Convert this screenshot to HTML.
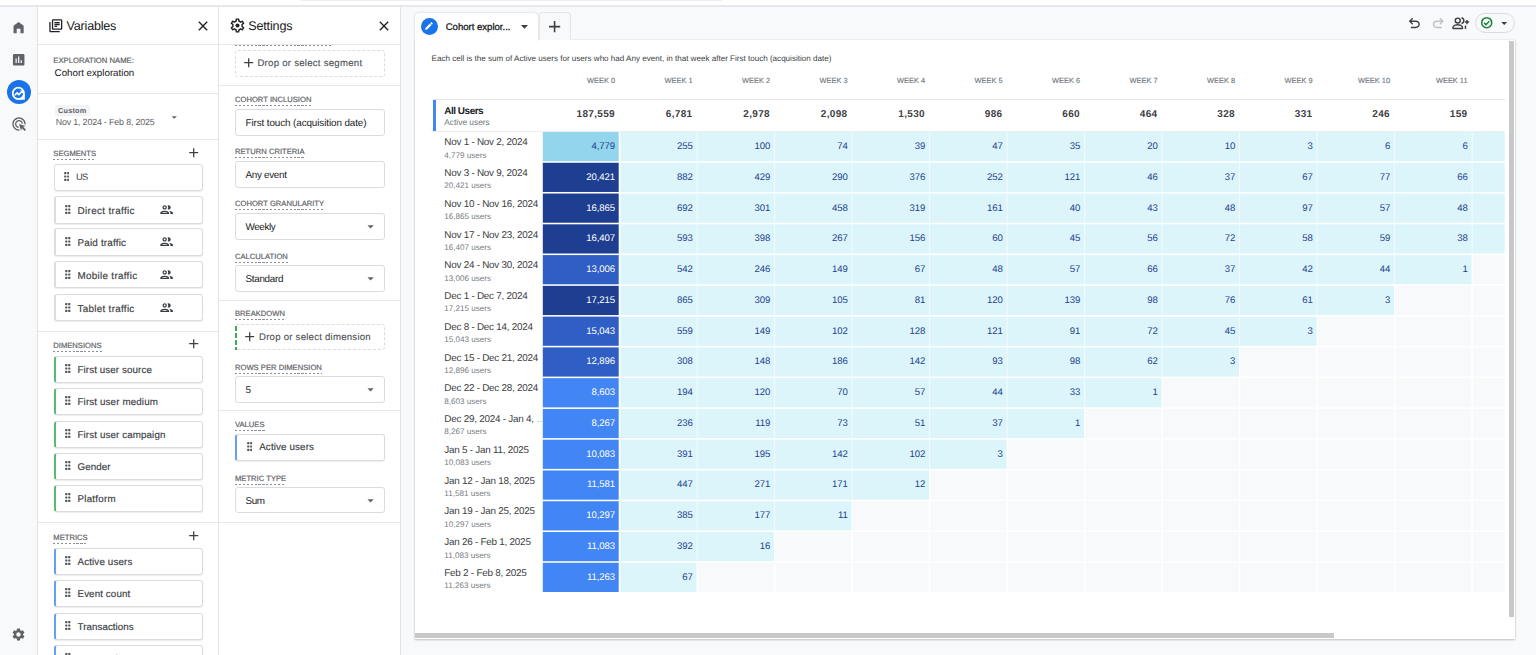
<!DOCTYPE html>
<html lang="en"><head><meta charset="utf-8"><title>Cohort exploration</title>
<style>
html,body{margin:0;padding:0}
body{width:1536px;height:655px;overflow:hidden;background:#fff;position:relative;font-family:"Liberation Sans",Arial,sans-serif;color:#3c4043;-webkit-font-smoothing:antialiased;text-rendering:geometricPrecision}
div,span{box-sizing:border-box}
.abs,.ic,.t,.lbl,.card,.box,.cell,.hd,.tot,.rl,.rs{position:absolute}
.t{white-space:nowrap;line-height:1}
.lbl{white-space:nowrap;line-height:1;font-size:7.6px;letter-spacing:.02px;color:#5f6368;-webkit-text-stroke:.2px #5f6368;padding-bottom:2.6px;background:repeating-linear-gradient(90deg,#8a9096 0,#8a9096 2.2px,transparent 2.2px,transparent 3.9px) left bottom/100% 1px no-repeat}
.card{left:53.5px;width:149.5px;height:27px;background:#fff;border:1px solid #dadce0;border-radius:3px;box-shadow:0 1px 1px rgba(60,64,67,.10)}
.card.seg{border-left:2px solid #dadce0}
.card.dim{border-left:2.6px solid #5bb974}
.card.met{border-left:2.6px solid #669df6}
.card .t{font-size:10.2px;color:#3c4043;-webkit-text-stroke:.16px #3c4043}
.ct{color:#4d5156;-webkit-text-stroke:.12px #4d5156}
.box{left:235px;width:149.5px;height:26.4px;background:#fff;border:1px solid #dadce0;border-radius:3px}
.box .t{left:9.5px;top:9px;color:#202124}
.hline{position:absolute;height:1px;background:#e6e8eb}
.cell{height:29.2px;width:80px;text-align:right;font-size:9.6px;letter-spacing:-.1px;line-height:30.6px;padding-right:3.8px;color:#1f3f8f;white-space:nowrap}
.hd{font-size:7.4px;letter-spacing:0;color:#747a80;-webkit-text-stroke:.15px #747a80;text-align:right;width:76px;line-height:1;white-space:nowrap}
.tot{font-size:10px;font-weight:700;letter-spacing:.33px;color:#3c4043;text-align:right;width:76px;line-height:1;white-space:nowrap}
.rl{left:444.3px;font-size:9.9px;letter-spacing:-.24px;color:#3c4043;line-height:1;white-space:nowrap;width:98.2px;height:12px;overflow:hidden}
.rs{left:444.3px;font-size:8.1px;color:#777c82;line-height:1;white-space:nowrap}
</style></head><body>

<div class="abs" style="left:300px;top:0;width:422px;height:1px;background:#eceef0"></div>
<div class="abs" style="left:0;top:5px;width:1536px;height:1.5px;background:#e6e8eb"></div>
<div class="abs" style="left:0;top:6.5px;width:37px;height:649px;background:#f8f9fa;border-right:1px solid #e0e2e5;width:38px"></div>
<svg class="ic" style="left:11px;top:20.3px;width:15.2px;height:15.2px;" viewBox="0 0 24 24"><path fill="#5f6368" d="M12 3L4 9v12h5v-7h6v7h5V9z"/></svg>
<svg class="ic" style="left:11.4px;top:52.2px;width:15.4px;height:15.4px;" viewBox="0 0 24 24"><path fill="#5f6368" d="M19 3H5c-1.1 0-2 .9-2 2v14c0 1.1.9 2 2 2h14c1.1 0 2-.9 2-2V5c0-1.1-.9-2-2-2zM9 17H7v-7h2v7zm4 0h-2V7h2v10zm4 0h-2v-4h2v4z"/></svg>
<div class="abs" style="left:6.6px;top:80px;width:24px;height:24px;border-radius:50%;background:#1a73e8"></div>
<svg class="ic" style="left:10.05px;top:84.55px;width:16.7px;height:16.7px;overflow:visible" viewBox="0 0 24 24"><path fill="#fff" d="M21.300 12.500v8.800h-8.800z"/><circle cx="12" cy="12" r="8.100" fill="#1a73e8" stroke="#fff" stroke-width="2.600"/><path fill="none" stroke="#fff" stroke-width="2.300" stroke-linejoin="miter" d="M6.900 14.500l3.200-3.200 2.600 2.600 3.900-3.900"/><path fill="#fff" d="M14.200 8h4.500v4.500z"/></svg>
<svg class="ic" style="left:11px;top:116px;width:16px;height:16px;" viewBox="0 0 24 24"><path fill="#5f6368" d="M11.71 17.99C8.53 17.84 6 15.22 6 12c0-3.31 2.69-6 6-6 3.22 0 5.84 2.53 5.99 5.71l-2.1-.63C15.48 9.31 13.89 8 12 8c-2.21 0-4 1.79-4 4 0 1.890 1.310 3.480 3.080 3.890l.63 2.1zM22 12c0 .3-.01.6-.04.9l-1.970-.590c.010-.100.010-.210.010-.310 0-4.420-3.580-8-8-8s-8 3.580-8 8 3.580 8 8 8c.100 0 .210 0 .310-.010l.590 1.970c-.3.03-.6.04-.9.04-5.520 0-10-4.480-10-10S6.480 2 12 2s10 4.480 10 10zm-3.770 4.260L22 15l-10-3 3 10 1.260-3.770 4.270 4.270 1.980-1.980-4.280-4.260z"/></svg>
<svg class="ic" style="left:11.3px;top:627.3px;width:15px;height:15px;" viewBox="0 0 24 24"><path fill="#5f6368" d="M19.14 12.94c.04-.3.06-.61.06-.94 0-.32-.02-.64-.07-.94l2.030-1.580c.18-.14.23-.41.12-.61l-1.920-3.320c-.12-.22-.37-.29-.59-.22l-2.390.96c-.5-.38-1.030-.7-1.620-.94l-.36-2.540c-.04-.24-.24-.41-.48-.41h-3.840c-.24 0-.43.17-.47.41l-.36 2.540c-.59.24-1.130.57-1.620.94l-2.390-.96c-.22-.08-.47 0-.59.22L2.740 8.870c-.12.21-.08.47.12.61l2.030 1.580c-.05.3-.09.63-.09.94s.02.64.07.94l-2.030 1.580c-.18.14-.23.41-.12.61l1.920 3.320c.12.22.37.29.59.22l2.390-.96c.5.38 1.030.7 1.620.94l.36 2.540c.05.24.24.41.48.41h3.840c.24 0 .44-.17.47-.41l.36-2.540c.59-.24 1.130-.56 1.620-.94l2.390.96c.22.08.47 0 .59-.22l1.920-3.320c.12-.22.07-.47-.12-.61l-2.010-1.580zM12 15.600c-1.980 0-3.600-1.620-3.600-3.600s1.620-3.600 3.600-3.600 3.600 1.620 3.600 3.600-1.620 3.600-3.600 3.600z"/></svg>
<div class="abs" style="left:38px;top:6.5px;width:181px;height:649px;background:#fff;border-right:1px solid #e2e4e7"></div>
<svg class="ic" style="left:48px;top:18px;width:15.6px;height:15.6px;" viewBox="0 0 24 24"><path fill="#202124" d="M4 6H2v14c0 1.100.9 2 2 2h14v-2H4V6zm16-4H8c-1.100 0-2 .9-2 2v12c0 1.100.9 2 2 2h12c1.100 0 2-.9 2-2V4c0-1.100-.9-2-2-2zm0 14H8V4h12v12zM10 9h8v2h-8zm0 3h4v2h-4zm0-6h8v2h-8z"/></svg>
<div class="t" style="left:66.6px;top:20.1px;font-size:12.6px;letter-spacing:-.23px;color:#202124">Variables</div>
<svg class="ic" style="left:194.5px;top:17.8px;width:16px;height:16px;" viewBox="0 0 24 24"><path fill="#202124" d="M19 6.41L17.59 5 12 10.59 6.41 5 5 6.41 10.59 12 5 17.59 6.41 19 12 13.41 17.59 19 19 17.59 13.41 12z"/></svg>
<div class="hline" style="left:38px;top:44px;width:180px"></div>
<div class="t" style="left:53.3px;top:57.2px;font-size:7.7px;letter-spacing:0;color:#5f6368;-webkit-text-stroke:.2px #5f6368">EXPLORATION NAME:</div>
<div class="t" style="left:54.6px;top:68.500px;font-size:9.75px;color:#202124">Cohort exploration</div>
<div class="hline" style="left:38px;top:93px;width:180px"></div>
<div class="abs" style="left:55.3px;top:105.3px;width:34.5px;height:10.6px;background:#f1f3f4;border-radius:2px"></div>
<div class="t" style="left:58px;top:107.3px;font-size:7.3px;font-weight:700;letter-spacing:.22px;color:#5f6368">Custom</div>
<div class="t" style="left:55.7px;top:118px;font-size:8.9px;letter-spacing:-.17px;color:#5f6368">Nov 1, 2024 - Feb 8, 2025</div>
<svg class="ic" style="left:167.6px;top:110.5px;width:12.6px;height:12.6px;" viewBox="0 0 24 24"><path fill="#5f6368" d="M7 10l5 5 5-5z"/></svg>
<div class="hline" style="left:38px;top:139px;width:180px"></div>
<div class="lbl" style="left:53.3px;top:150.3px">SEGMENTS</div>
<svg class="ic" style="left:185.6px;top:144.60000000000002px;width:15.4px;height:15.4px;" viewBox="0 0 24 24"><path fill="#3c4043" d="M19 13h-6v6h-2v-6H5v-2h6V5h2v6h6v2z"/></svg>
<div class="card" style="top:164px;height:27px"><svg class="ic" style="left:9.2px;top:7.4px;width:5.6px;height:9px" viewBox="0 0 5.6 9"><rect x="0.20" y="0.10" width="2.2" height="2.2" rx=".5" fill="#54585d"/><rect x="0.20" y="3.40" width="2.2" height="2.2" rx=".5" fill="#54585d"/><rect x="0.20" y="6.70" width="2.2" height="2.2" rx=".5" fill="#54585d"/><rect x="3.20" y="0.10" width="2.2" height="2.2" rx=".5" fill="#54585d"/><rect x="3.20" y="3.40" width="2.2" height="2.2" rx=".5" fill="#54585d"/><rect x="3.20" y="6.70" width="2.2" height="2.2" rx=".5" fill="#54585d"/></svg><div class="t" style="left:21.5px;top:8.4px;font-size:9.3px;letter-spacing:-.7px;-webkit-text-stroke:0">US</div></div>
<div class="card seg" style="top:196px;height:28px"><svg class="ic" style="left:9.6px;top:8.1px;width:5.6px;height:9px" viewBox="0 0 5.6 9"><rect x="0.20" y="0.10" width="2.2" height="2.2" rx=".5" fill="#54585d"/><rect x="0.20" y="3.40" width="2.2" height="2.2" rx=".5" fill="#54585d"/><rect x="0.20" y="6.70" width="2.2" height="2.2" rx=".5" fill="#54585d"/><rect x="3.20" y="0.10" width="2.2" height="2.2" rx=".5" fill="#54585d"/><rect x="3.20" y="3.40" width="2.2" height="2.2" rx=".5" fill="#54585d"/><rect x="3.20" y="6.70" width="2.2" height="2.2" rx=".5" fill="#54585d"/></svg><div class="t" style="left:22px;top:9.700px;font-size:9.9px;letter-spacing:0.345px">Direct traffic</div><svg class="ic" style="left:103px;top:5.3px;width:15.2px;height:15.2px;" viewBox="0 0 24 24"><path fill="#3c4043" d="M9 13.750c-2.340 0-7 1.170-7 3.500V19h14v-1.750c0-2.330-4.660-3.500-7-3.500zM4.340 17c.84-.58 2.870-1.250 4.660-1.250s3.820.67 4.660 1.250H4.340zM9 12c1.930 0 3.500-1.570 3.500-3.500S10.930 5 9 5 5.500 6.570 5.500 8.500 7.070 12 9 12zm0-5c.83 0 1.500.67 1.500 1.500S9.830 10 9 10s-1.500-.67-1.500-1.500S8.170 7 9 7zm7.040 6.810c1.160.84 1.960 1.960 1.960 3.440V19h4v-1.750c0-2.020-3.500-3.170-5.960-3.440zM15 12c1.930 0 3.500-1.570 3.500-3.500S16.930 5 15 5c-.54 0-1.040.13-1.500.35.63.89 1 1.980 1 3.150s-.37 2.260-1 3.150c.46.22.96.35 1.500.35z"/></svg></div>
<div class="card seg" style="top:228px;height:28px"><svg class="ic" style="left:9.6px;top:8.1px;width:5.6px;height:9px" viewBox="0 0 5.6 9"><rect x="0.20" y="0.10" width="2.2" height="2.2" rx=".5" fill="#54585d"/><rect x="0.20" y="3.40" width="2.2" height="2.2" rx=".5" fill="#54585d"/><rect x="0.20" y="6.70" width="2.2" height="2.2" rx=".5" fill="#54585d"/><rect x="3.20" y="0.10" width="2.2" height="2.2" rx=".5" fill="#54585d"/><rect x="3.20" y="3.40" width="2.2" height="2.2" rx=".5" fill="#54585d"/><rect x="3.20" y="6.70" width="2.2" height="2.2" rx=".5" fill="#54585d"/></svg><div class="t" style="left:22px;top:9.700px;font-size:9.9px;letter-spacing:0.181px">Paid traffic</div><svg class="ic" style="left:103px;top:5.3px;width:15.2px;height:15.2px;" viewBox="0 0 24 24"><path fill="#3c4043" d="M9 13.750c-2.340 0-7 1.170-7 3.500V19h14v-1.750c0-2.330-4.660-3.500-7-3.500zM4.340 17c.84-.58 2.870-1.250 4.660-1.250s3.820.67 4.660 1.250H4.340zM9 12c1.930 0 3.500-1.570 3.500-3.500S10.930 5 9 5 5.500 6.570 5.500 8.500 7.070 12 9 12zm0-5c.83 0 1.500.67 1.500 1.500S9.830 10 9 10s-1.500-.67-1.500-1.500S8.170 7 9 7zm7.040 6.810c1.160.84 1.960 1.960 1.960 3.440V19h4v-1.750c0-2.020-3.500-3.170-5.960-3.440zM15 12c1.930 0 3.500-1.570 3.500-3.500S16.930 5 15 5c-.54 0-1.040.13-1.500.35.63.89 1 1.980 1 3.150s-.37 2.260-1 3.150c.46.22.96.35 1.500.35z"/></svg></div>
<div class="card seg" style="top:261px;height:27px"><svg class="ic" style="left:9.6px;top:8.1px;width:5.6px;height:9px" viewBox="0 0 5.6 9"><rect x="0.20" y="0.10" width="2.2" height="2.2" rx=".5" fill="#54585d"/><rect x="0.20" y="3.40" width="2.2" height="2.2" rx=".5" fill="#54585d"/><rect x="0.20" y="6.70" width="2.2" height="2.2" rx=".5" fill="#54585d"/><rect x="3.20" y="0.10" width="2.2" height="2.2" rx=".5" fill="#54585d"/><rect x="3.20" y="3.40" width="2.2" height="2.2" rx=".5" fill="#54585d"/><rect x="3.20" y="6.70" width="2.2" height="2.2" rx=".5" fill="#54585d"/></svg><div class="t" style="left:22px;top:9.700px;font-size:9.9px;letter-spacing:0.290px">Mobile traffic</div><svg class="ic" style="left:103px;top:5.3px;width:15.2px;height:15.2px;" viewBox="0 0 24 24"><path fill="#3c4043" d="M9 13.750c-2.340 0-7 1.170-7 3.500V19h14v-1.750c0-2.330-4.660-3.500-7-3.500zM4.340 17c.84-.58 2.870-1.250 4.660-1.250s3.820.67 4.660 1.250H4.340zM9 12c1.930 0 3.500-1.570 3.500-3.500S10.930 5 9 5 5.500 6.570 5.500 8.500 7.070 12 9 12zm0-5c.83 0 1.500.67 1.500 1.500S9.830 10 9 10s-1.500-.67-1.500-1.500S8.170 7 9 7zm7.040 6.810c1.160.84 1.960 1.960 1.960 3.440V19h4v-1.750c0-2.020-3.500-3.170-5.960-3.440zM15 12c1.930 0 3.500-1.570 3.500-3.500S16.930 5 15 5c-.54 0-1.040.13-1.500.35.63.89 1 1.980 1 3.150s-.37 2.260-1 3.150c.46.22.96.35 1.500.35z"/></svg></div>
<div class="card seg" style="top:294px;height:27px"><svg class="ic" style="left:9.6px;top:8.1px;width:5.6px;height:9px" viewBox="0 0 5.6 9"><rect x="0.20" y="0.10" width="2.2" height="2.2" rx=".5" fill="#54585d"/><rect x="0.20" y="3.40" width="2.2" height="2.2" rx=".5" fill="#54585d"/><rect x="0.20" y="6.70" width="2.2" height="2.2" rx=".5" fill="#54585d"/><rect x="3.20" y="0.10" width="2.2" height="2.2" rx=".5" fill="#54585d"/><rect x="3.20" y="3.40" width="2.2" height="2.2" rx=".5" fill="#54585d"/><rect x="3.20" y="6.70" width="2.2" height="2.2" rx=".5" fill="#54585d"/></svg><div class="t" style="left:22px;top:9.700px;font-size:9.9px;letter-spacing:0.288px">Tablet traffic</div><svg class="ic" style="left:103px;top:5.3px;width:15.2px;height:15.2px;" viewBox="0 0 24 24"><path fill="#3c4043" d="M9 13.750c-2.340 0-7 1.170-7 3.500V19h14v-1.750c0-2.330-4.660-3.500-7-3.500zM4.340 17c.84-.58 2.870-1.250 4.660-1.250s3.820.67 4.660 1.250H4.340zM9 12c1.930 0 3.500-1.570 3.500-3.500S10.930 5 9 5 5.500 6.570 5.500 8.500 7.070 12 9 12zm0-5c.83 0 1.500.67 1.500 1.500S9.830 10 9 10s-1.500-.67-1.500-1.500S8.170 7 9 7zm7.040 6.810c1.160.84 1.960 1.960 1.960 3.440V19h4v-1.750c0-2.020-3.500-3.170-5.960-3.440zM15 12c1.930 0 3.500-1.570 3.500-3.500S16.930 5 15 5c-.54 0-1.040.13-1.500.35.63.89 1 1.980 1 3.150s-.37 2.260-1 3.150c.46.22.96.35 1.500.35z"/></svg></div>
<div class="hline" style="left:38px;top:331px;width:180px"></div>
<div class="lbl" style="left:53.3px;top:341.7px">DIMENSIONS</div>
<svg class="ic" style="left:185.6px;top:336.0px;width:15.4px;height:15.4px;" viewBox="0 0 24 24"><path fill="#3c4043" d="M19 13h-6v6h-2v-6H5v-2h6V5h2v6h6v2z"/></svg>
<div class="card dim" style="top:356px"><svg class="ic" style="left:9.6px;top:7.2px;width:5.6px;height:9px" viewBox="0 0 5.6 9"><rect x="0.20" y="0.10" width="2.2" height="2.2" rx=".5" fill="#54585d"/><rect x="0.20" y="3.40" width="2.2" height="2.2" rx=".5" fill="#54585d"/><rect x="0.20" y="6.70" width="2.2" height="2.2" rx=".5" fill="#54585d"/><rect x="3.20" y="0.10" width="2.2" height="2.2" rx=".5" fill="#54585d"/><rect x="3.20" y="3.40" width="2.2" height="2.2" rx=".5" fill="#54585d"/><rect x="3.20" y="6.70" width="2.2" height="2.2" rx=".5" fill="#54585d"/></svg><div class="t" style="left:22px;top:9px;font-size:9.8px;letter-spacing:0.088px">First user source</div></div>
<div class="card dim" style="top:388px"><svg class="ic" style="left:9.6px;top:7.2px;width:5.6px;height:9px" viewBox="0 0 5.6 9"><rect x="0.20" y="0.10" width="2.2" height="2.2" rx=".5" fill="#54585d"/><rect x="0.20" y="3.40" width="2.2" height="2.2" rx=".5" fill="#54585d"/><rect x="0.20" y="6.70" width="2.2" height="2.2" rx=".5" fill="#54585d"/><rect x="3.20" y="0.10" width="2.2" height="2.2" rx=".5" fill="#54585d"/><rect x="3.20" y="3.40" width="2.2" height="2.2" rx=".5" fill="#54585d"/><rect x="3.20" y="6.70" width="2.2" height="2.2" rx=".5" fill="#54585d"/></svg><div class="t" style="left:22px;top:9px;font-size:9.8px;letter-spacing:0.124px">First user medium</div></div>
<div class="card dim" style="top:421px"><svg class="ic" style="left:9.6px;top:7.2px;width:5.6px;height:9px" viewBox="0 0 5.6 9"><rect x="0.20" y="0.10" width="2.2" height="2.2" rx=".5" fill="#54585d"/><rect x="0.20" y="3.40" width="2.2" height="2.2" rx=".5" fill="#54585d"/><rect x="0.20" y="6.70" width="2.2" height="2.2" rx=".5" fill="#54585d"/><rect x="3.20" y="0.10" width="2.2" height="2.2" rx=".5" fill="#54585d"/><rect x="3.20" y="3.40" width="2.2" height="2.2" rx=".5" fill="#54585d"/><rect x="3.20" y="6.70" width="2.2" height="2.2" rx=".5" fill="#54585d"/></svg><div class="t" style="left:22px;top:9px;font-size:9.8px;letter-spacing:0.103px">First user campaign</div></div>
<div class="card dim" style="top:453px"><svg class="ic" style="left:9.6px;top:7.2px;width:5.6px;height:9px" viewBox="0 0 5.6 9"><rect x="0.20" y="0.10" width="2.2" height="2.2" rx=".5" fill="#54585d"/><rect x="0.20" y="3.40" width="2.2" height="2.2" rx=".5" fill="#54585d"/><rect x="0.20" y="6.70" width="2.2" height="2.2" rx=".5" fill="#54585d"/><rect x="3.20" y="0.10" width="2.2" height="2.2" rx=".5" fill="#54585d"/><rect x="3.20" y="3.40" width="2.2" height="2.2" rx=".5" fill="#54585d"/><rect x="3.20" y="6.70" width="2.2" height="2.2" rx=".5" fill="#54585d"/></svg><div class="t" style="left:22px;top:9px;font-size:9.8px;letter-spacing:0.045px">Gender</div></div>
<div class="card dim" style="top:485px"><svg class="ic" style="left:9.6px;top:7.2px;width:5.6px;height:9px" viewBox="0 0 5.6 9"><rect x="0.20" y="0.10" width="2.2" height="2.2" rx=".5" fill="#54585d"/><rect x="0.20" y="3.40" width="2.2" height="2.2" rx=".5" fill="#54585d"/><rect x="0.20" y="6.70" width="2.2" height="2.2" rx=".5" fill="#54585d"/><rect x="3.20" y="0.10" width="2.2" height="2.2" rx=".5" fill="#54585d"/><rect x="3.20" y="3.40" width="2.2" height="2.2" rx=".5" fill="#54585d"/><rect x="3.20" y="6.70" width="2.2" height="2.2" rx=".5" fill="#54585d"/></svg><div class="t" style="left:22px;top:9px;font-size:9.8px;letter-spacing:0.230px">Platform</div></div>
<div class="hline" style="left:38px;top:522px;width:180px"></div>
<div class="lbl" style="left:53.3px;top:533.7px">METRICS</div>
<svg class="ic" style="left:185.6px;top:528.0px;width:15.4px;height:15.4px;" viewBox="0 0 24 24"><path fill="#3c4043" d="M19 13h-6v6h-2v-6H5v-2h6V5h2v6h6v2z"/></svg>
<div class="card met" style="top:548px"><svg class="ic" style="left:9.6px;top:7.2px;width:5.6px;height:9px" viewBox="0 0 5.6 9"><rect x="0.20" y="0.10" width="2.2" height="2.2" rx=".5" fill="#54585d"/><rect x="0.20" y="3.40" width="2.2" height="2.2" rx=".5" fill="#54585d"/><rect x="0.20" y="6.70" width="2.2" height="2.2" rx=".5" fill="#54585d"/><rect x="3.20" y="0.10" width="2.2" height="2.2" rx=".5" fill="#54585d"/><rect x="3.20" y="3.40" width="2.2" height="2.2" rx=".5" fill="#54585d"/><rect x="3.20" y="6.70" width="2.2" height="2.2" rx=".5" fill="#54585d"/></svg><div class="t" style="left:22px;top:9px;font-size:9.8px;letter-spacing:0.132px">Active users</div></div>
<div class="card met" style="top:580px"><svg class="ic" style="left:9.6px;top:7.2px;width:5.6px;height:9px" viewBox="0 0 5.6 9"><rect x="0.20" y="0.10" width="2.2" height="2.2" rx=".5" fill="#54585d"/><rect x="0.20" y="3.40" width="2.2" height="2.2" rx=".5" fill="#54585d"/><rect x="0.20" y="6.70" width="2.2" height="2.2" rx=".5" fill="#54585d"/><rect x="3.20" y="0.10" width="2.2" height="2.2" rx=".5" fill="#54585d"/><rect x="3.20" y="3.40" width="2.2" height="2.2" rx=".5" fill="#54585d"/><rect x="3.20" y="6.70" width="2.2" height="2.2" rx=".5" fill="#54585d"/></svg><div class="t" style="left:22px;top:9px;font-size:9.8px;letter-spacing:0.096px">Event count</div></div>
<div class="card met" style="top:613px"><svg class="ic" style="left:9.6px;top:7.2px;width:5.6px;height:9px" viewBox="0 0 5.6 9"><rect x="0.20" y="0.10" width="2.2" height="2.2" rx=".5" fill="#54585d"/><rect x="0.20" y="3.40" width="2.2" height="2.2" rx=".5" fill="#54585d"/><rect x="0.20" y="6.70" width="2.2" height="2.2" rx=".5" fill="#54585d"/><rect x="3.20" y="0.10" width="2.2" height="2.2" rx=".5" fill="#54585d"/><rect x="3.20" y="3.40" width="2.2" height="2.2" rx=".5" fill="#54585d"/><rect x="3.20" y="6.70" width="2.2" height="2.2" rx=".5" fill="#54585d"/></svg><div class="t" style="left:22px;top:9px;font-size:9.8px;letter-spacing:0.045px">Transactions</div></div>
<div class="card met" style="top:645px"><svg class="ic" style="left:9.6px;top:7.2px;width:5.6px;height:9px" viewBox="0 0 5.6 9"><rect x="0.20" y="0.10" width="2.2" height="2.2" rx=".5" fill="#54585d"/><rect x="0.20" y="3.40" width="2.2" height="2.2" rx=".5" fill="#54585d"/><rect x="0.20" y="6.70" width="2.2" height="2.2" rx=".5" fill="#54585d"/><rect x="3.20" y="0.10" width="2.2" height="2.2" rx=".5" fill="#54585d"/><rect x="3.20" y="3.40" width="2.2" height="2.2" rx=".5" fill="#54585d"/><rect x="3.20" y="6.70" width="2.2" height="2.2" rx=".5" fill="#54585d"/></svg><div class="t" style="left:22px;top:9px;font-size:9.8px">Event value</div></div>
<div class="abs" style="left:219px;top:6.5px;width:182px;height:649px;background:#fff;border-right:1px solid #e2e4e7"></div>
<svg class="ic" style="left:229.4px;top:16.9px;width:17px;height:17px;" viewBox="0 0 24 24"><path fill="#202124" d="M19.43 12.98c.04-.32.07-.64.07-.98 0-.34-.03-.66-.07-.98l2.110-1.650c.19-.15.24-.42.12-.64l-2-3.460c-.09-.16-.26-.25-.44-.25-.06 0-.12.010-.17.030l-2.490 1c-.52-.4-1.080-.73-1.690-.98l-.38-2.650C14.460 2.180 14.250 2 14 2h-4c-.25 0-.46.18-.49.42l-.38 2.650c-.61.25-1.170.59-1.690.98l-2.490-1c-.06-.02-.12-.03-.18-.03-.17 0-.34.09-.43.25l-2 3.460c-.13.22-.07.49.12.64l2.110 1.650c-.04.32-.07.65-.07.98 0 .33.03.66.07.98l-2.110 1.650c-.19.15-.24.42-.12.64l2 3.460c.09.16.26.25.44.25.06 0 .12-.010.17-.030l2.490-1c.52.4 1.080.73 1.690.98l.38 2.650c.03.24.24.42.49.42h4c.25 0 .46-.18.49-.42l.38-2.650c.61-.25 1.170-.59 1.690-.98l2.490 1c.06.02.12.03.18.03.17 0 .34-.09.43-.25l2-3.460c.12-.22.07-.49-.12-.64l-2.110-1.650zm-1.980-1.710c.04.31.05.52.05.73 0 .21-.02.43-.05.73l-.14 1.130.89.7 1.080.84-.7 1.210-1.270-.51-1.040-.42-.9.68c-.43.32-.84.56-1.250.73l-1.060.43-.16 1.130-.2 1.350h-1.400l-.19-1.350-.16-1.130-1.060-.43c-.43-.18-.83-.41-1.230-.71l-.91-.7-1.060.43-1.270.51-.7-1.210 1.080-.84.89-.7-.14-1.130c-.03-.31-.05-.54-.05-.74s.02-.43.05-.73l.14-1.130-.89-.7-1.080-.84.7-1.210 1.270.51 1.040.42.9-.68c.43-.32.84-.56 1.250-.73l1.060-.43.16-1.130.2-1.350h1.390l.19 1.350.16 1.130 1.060.43c.43.18.83.41 1.230.71l.91.7 1.060-.43 1.270-.51.7 1.210-1.070.85-.89.7.14 1.130z"/><circle cx="12" cy="12" r="2.900" fill="#202124"/></svg>
<div class="t" style="left:248.2px;top:20.1px;font-size:12.6px;letter-spacing:-.16px;color:#202124">Settings</div>
<svg class="ic" style="left:376.2px;top:17.8px;width:16px;height:16px;" viewBox="0 0 24 24"><path fill="#202124" d="M19 6.41L17.59 5 12 10.59 6.41 5 5 6.41 10.59 12 5 17.59 6.41 19 12 13.41 17.59 19 19 17.59 13.41 12z"/></svg>
<div class="hline" style="left:219px;top:44px;width:181px"></div>
<div class="abs" style="left:235px;top:45px;width:96px;height:1px;background:repeating-linear-gradient(90deg,#8a9096 0,#8a9096 2.2px,transparent 2.2px,transparent 3.9px)"></div>
<div class="abs" style="left:235px;top:50px;width:149.5px;height:26.7px;border:1px dashed #dadce0;border-radius:3px"></div>
<svg class="ic" style="left:240.6px;top:55.4px;width:15.4px;height:15.4px;" viewBox="0 0 24 24"><path fill="#3c4043" d="M19 13h-6v6h-2v-6H5v-2h6V5h2v6h6v2z"/></svg>
<div class="t ct" style="left:257.4px;top:58.700px;font-size:9.6px;letter-spacing:0.261px">Drop or select segment</div>
<div class="hline" style="left:219px;top:85px;width:181px"></div>
<div class="lbl" style="left:235px;top:95.8px">COHORT INCLUSION</div>
<div class="box" style="top:109.2px"><div class="t" style="font-size:9.9px;letter-spacing:-0.105px">First touch (acquisition date)</div></div>
<div class="lbl" style="left:235px;top:147.8px">RETURN CRITERIA</div>
<div class="box" style="top:161.3px"><div class="t" style="font-size:9.9px;letter-spacing:-0.317px">Any event</div></div>
<div class="lbl" style="left:235px;top:200px">COHORT GRANULARITY</div>
<div class="box" style="top:213.3px"><div class="t" style="font-size:9.9px;letter-spacing:-0.412px">Weekly</div><svg class="ic" style="left:127.3px;top:5.2px;width:15.2px;height:15.2px;" viewBox="0 0 24 24"><path fill="#5f6368" d="M7 10l5 5 5-5z"/></svg></div>
<div class="lbl" style="left:235px;top:253px">CALCULATION</div>
<div class="box" style="top:265.3px"><div class="t" style="font-size:9.9px;letter-spacing:-0.299px">Standard</div><svg class="ic" style="left:127.3px;top:5.2px;width:15.2px;height:15.2px;" viewBox="0 0 24 24"><path fill="#5f6368" d="M7 10l5 5 5-5z"/></svg></div>
<div class="hline" style="left:219px;top:300px;width:181px"></div>
<div class="lbl" style="left:235px;top:310px">BREAKDOWN</div>
<div class="abs" style="left:236px;top:324.2px;width:148.5px;height:26px;border:1px dashed #dadce0;border-left:none;border-radius:0 3px 3px 0"></div>
<div class="abs" style="left:234.700px;top:325.800px;width:2.400px;height:24.200px;background:repeating-linear-gradient(180deg,#3dab58 0,#3dab58 4.7px,transparent 4.7px,transparent 7px)"></div>
<svg class="ic" style="left:241.8px;top:329.4px;width:15.4px;height:15.4px;" viewBox="0 0 24 24"><path fill="#3c4043" d="M19 13h-6v6h-2v-6H5v-2h6V5h2v6h6v2z"/></svg>
<div class="t ct" style="left:259px;top:332.600px;font-size:9.6px;letter-spacing:0.243px">Drop or select dimension</div>
<div class="lbl" style="left:235px;top:364px">ROWS PER DIMENSION</div>
<div class="box" style="top:376.3px"><div class="t" style="font-size:9.9px;letter-spacing:-0.344px">5</div><svg class="ic" style="left:127.3px;top:5.2px;width:15.2px;height:15.2px;" viewBox="0 0 24 24"><path fill="#5f6368" d="M7 10l5 5 5-5z"/></svg></div>
<div class="hline" style="left:219px;top:410px;width:181px"></div>
<div class="lbl" style="left:235px;top:421px">VALUES</div>
<div class="card met" style="left:235px;top:434px;height:27px"><svg class="ic" style="left:9.7px;top:7.2px;width:5.6px;height:9px" viewBox="0 0 5.6 9"><rect x="0.20" y="0.10" width="2.2" height="2.2" rx=".5" fill="#54585d"/><rect x="0.20" y="3.40" width="2.2" height="2.2" rx=".5" fill="#54585d"/><rect x="0.20" y="6.70" width="2.2" height="2.2" rx=".5" fill="#54585d"/><rect x="3.20" y="0.10" width="2.2" height="2.2" rx=".5" fill="#54585d"/><rect x="3.20" y="3.40" width="2.2" height="2.2" rx=".5" fill="#54585d"/><rect x="3.20" y="6.70" width="2.2" height="2.2" rx=".5" fill="#54585d"/></svg><div class="t" style="left:22.2px;top:8.2px;font-size:9.8px;letter-spacing:0.132px">Active users</div></div>
<div class="lbl" style="left:235px;top:474.5px">METRIC TYPE</div>
<div class="box" style="top:486.8px"><div class="t" style="font-size:9.9px;letter-spacing:-0.398px">Sum</div><svg class="ic" style="left:127.3px;top:5.2px;width:15.2px;height:15.2px;" viewBox="0 0 24 24"><path fill="#5f6368" d="M7 10l5 5 5-5z"/></svg></div>
<div class="hline" style="left:219px;top:522px;width:181px"></div>
<div class="abs" style="left:401px;top:6.5px;width:1135px;height:649px;background:#f8f9fa"></div>
<div class="abs" style="left:414.5px;top:40px;width:1100.5px;height:599px;background:#fff;box-shadow:0 1px 2px rgba(60,64,67,.28),0 0 1.5px rgba(60,64,67,.16)"></div>
<div class="abs" style="left:414.5px;top:12.5px;width:123.5px;height:29px;background:#fff;border-radius:4px 4px 0 0;box-shadow:0 0 2px rgba(60,64,67,.3);clip-path:inset(-3px -3px 1px -3px)"></div>
<div class="abs" style="left:420.5px;top:17.5px;width:17.4px;height:17.4px;border-radius:50%;background:#1a73e8"></div>
<svg class="ic" style="left:424.2px;top:21.2px;width:10px;height:10px;" viewBox="0 0 24 24"><path fill="#fff" d="M3 17.250V21h3.750L17.810 9.940l-3.750-3.750L3 17.250zM20.710 7.040c.39-.39.39-1.020 0-1.410l-2.340-2.340c-.39-.39-1.020-.39-1.410 0l-1.830 1.830 3.750 3.750 1.830-1.830z"/></svg>
<div class="t" style="left:445.7px;top:23.300px;font-size:9.6px;letter-spacing:-.02px;color:#202124;-webkit-text-stroke:.3px #202124">Cohort explor...</div>
<svg class="ic" style="left:515.8px;top:17.6px;width:17px;height:17px;" viewBox="0 0 24 24"><path fill="#3c4043" d="M7 10l5 5 5-5z"/></svg>
<div class="abs" style="left:538.700px;top:12px;width:32.5px;height:28px;background:#f8f9fa;border:1px solid #e4e6e9;border-bottom:none;border-radius:4px 4px 0 0"></div>
<svg class="ic" style="left:544.6px;top:16.7px;width:19.2px;height:19.2px;" viewBox="0 0 24 24"><path fill="#3c4043" d="M19 13h-6v6h-2v-6H5v-2h6V5h2v6h6v2z"/></svg>
<svg class="ic" style="left:1406.3px;top:14.7px;width:16.6px;height:16.6px;" viewBox="0 0 24 24"><path fill="#3c4043" d="M7 19v-2h7.1q1.575 0 2.738-1T18 13.5 16.838 11 14.1 10H7.8l2.6 2.6L9 14 4 9l5-5 1.400 1.400L7.800 8h6.300q2.425 0 4.163 1.575T20 13.500t-1.737 3.925T14.100 19z"/></svg>
<svg class="ic" style="left:1430.1px;top:14.7px;width:16.6px;height:16.6px;transform:scaleX(-1)" viewBox="0 0 24 24"><path fill="#bdc1c6" d="M7 19v-2h7.1q1.575 0 2.738-1T18 13.5 16.838 11 14.1 10H7.8l2.6 2.6L9 14 4 9l5-5 1.400 1.400L7.800 8h6.300q2.425 0 4.163 1.575T20 13.500t-1.737 3.925T14.100 19z"/></svg>
<svg class="ic" style="left:1450.5px;top:14px;width:19.500px;height:18px" viewBox="0 0 26 24"><g fill="none" stroke="#3c4043" stroke-width="1.950"><circle cx="9" cy="8.800" r="3.300"/><path stroke-linejoin="round" d="M2.700 19.300v-1.300c0-2.500 4-3.700 6.300-3.700s6.300 1.200 6.300 3.700v1.300z"/><path d="M14 4.900a4 4 0 0 1 0 7.800"/><path d="M19.300 15.400v4.500"/><path stroke-width="1.900" d="M18.400 10.700h5.800M21.300 7.900v5.600"/></g></svg>
<div class="abs" style="left:1475px;top:13.400px;width:40px;height:19.600px;border:1px solid #dadce0;border-radius:10px;background:#f8f9fa"></div>
<svg class="ic" style="left:1480.3px;top:15.900px;width:13.400px;height:13.400px" viewBox="0 0 24 24"><circle cx="12" cy="12" r="9" fill="none" stroke="#188038" stroke-width="2.700"/><path fill="none" stroke="#188038" stroke-width="2.600" d="M7.500 12.300l3.200 3.200 6-6.200"/></svg>
<svg class="ic" style="left:1497.2px;top:16px;width:14.4px;height:14.4px;" viewBox="0 0 24 24"><path fill="#3c4043" d="M7 10l5 5 5-5z"/></svg>
<div class="t" style="left:431.6px;top:54.700px;font-size:8.07px;color:#3c4043">Each cell is the sum of Active users for users who had Any event, in that week after First touch (acquisition date)</div>
<div class="hd" style="left:538.8px;top:76.900px;width:80px;padding-right:3.8px">WEEK 0</div>
<div class="hd" style="left:616.3px;top:76.900px;width:80px;padding-right:3.8px">WEEK 1</div>
<div class="hd" style="left:693.8px;top:76.900px;width:80px;padding-right:3.8px">WEEK 2</div>
<div class="hd" style="left:771.3px;top:76.900px;width:80px;padding-right:3.8px">WEEK 3</div>
<div class="hd" style="left:848.8px;top:76.900px;width:80px;padding-right:3.8px">WEEK 4</div>
<div class="hd" style="left:926.3px;top:76.900px;width:80px;padding-right:3.8px">WEEK 5</div>
<div class="hd" style="left:1003.8px;top:76.900px;width:80px;padding-right:3.8px">WEEK 6</div>
<div class="hd" style="left:1081.3px;top:76.900px;width:80px;padding-right:3.8px">WEEK 7</div>
<div class="hd" style="left:1158.8px;top:76.900px;width:80px;padding-right:3.8px">WEEK 8</div>
<div class="hd" style="left:1236.3px;top:76.900px;width:80px;padding-right:3.8px">WEEK 9</div>
<div class="hd" style="left:1313.8px;top:76.900px;width:80px;padding-right:3.8px">WEEK 10</div>
<div class="hd" style="left:1391.3px;top:76.900px;width:80px;padding-right:3.8px">WEEK 11</div>
<div class="hline" style="left:432.8px;top:98.500px;width:1072px;background:#e4e6e9"></div>
<div class="hline" style="left:432.8px;top:130.800px;width:1072px;background:#eceef0"></div>
<div class="abs" style="left:432.800px;top:99.500px;width:3.400px;height:31.200px;background:#4285f4"></div>
<div class="t" style="left:444.3px;top:106.500px;font-size:10px;font-weight:700;letter-spacing:-.5px;color:#202124">All Users</div>
<div class="t" style="left:444.3px;top:118.300px;font-size:8.35px;color:#70757a">Active users</div>
<div class="tot" style="left:538.8px;top:110.300px;width:80px;padding-right:3.8px">187,559</div>
<div class="tot" style="left:616.3px;top:110.300px;width:80px;padding-right:3.8px">6,781</div>
<div class="tot" style="left:693.8px;top:110.300px;width:80px;padding-right:3.8px">2,978</div>
<div class="tot" style="left:771.3px;top:110.300px;width:80px;padding-right:3.8px">2,098</div>
<div class="tot" style="left:848.8px;top:110.300px;width:80px;padding-right:3.8px">1,530</div>
<div class="tot" style="left:926.3px;top:110.300px;width:80px;padding-right:3.8px">986</div>
<div class="tot" style="left:1003.8px;top:110.300px;width:80px;padding-right:3.8px">660</div>
<div class="tot" style="left:1081.3px;top:110.300px;width:80px;padding-right:3.8px">464</div>
<div class="tot" style="left:1158.8px;top:110.300px;width:80px;padding-right:3.8px">328</div>
<div class="tot" style="left:1236.3px;top:110.300px;width:80px;padding-right:3.8px">331</div>
<div class="tot" style="left:1313.8px;top:110.300px;width:80px;padding-right:3.8px">246</div>
<div class="tot" style="left:1391.3px;top:110.300px;width:80px;padding-right:3.8px">159</div>
<svg class="ic" style="left:0;top:0;width:1536px;height:655px" viewBox="0 0 1536 655"><rect x="542.8" y="132.00" width="75.9" height="29.2" fill="#93d5ed"/><rect x="620.4" y="132.00" width="884.3" height="29.2" fill="#dcf5fa"/><rect x="542.8" y="162.77" width="75.9" height="29.2" fill="#1e3f91"/><rect x="620.4" y="162.77" width="884.3" height="29.2" fill="#dcf5fa"/><rect x="542.8" y="193.54" width="75.9" height="29.2" fill="#1e3f91"/><rect x="620.4" y="193.54" width="884.3" height="29.2" fill="#dcf5fa"/><rect x="542.8" y="224.31" width="75.9" height="29.2" fill="#1e3f91"/><rect x="620.4" y="224.31" width="884.3" height="29.2" fill="#dcf5fa"/><rect x="542.8" y="255.08" width="75.9" height="29.2" fill="#2f5ec4"/><rect x="620.4" y="255.08" width="851.1" height="29.2" fill="#dcf5fa"/><rect x="1472.7" y="255.08" width="32.0" height="29.2" fill="#f8f9fa"/><rect x="542.8" y="285.85" width="75.9" height="29.2" fill="#1e3f91"/><rect x="620.4" y="285.85" width="773.6" height="29.2" fill="#dcf5fa"/><rect x="1395.2" y="285.85" width="109.5" height="29.2" fill="#f8f9fa"/><rect x="542.8" y="316.62" width="75.9" height="29.2" fill="#2f5ec4"/><rect x="620.4" y="316.62" width="696.1" height="29.2" fill="#dcf5fa"/><rect x="1317.7" y="316.62" width="187.0" height="29.2" fill="#f8f9fa"/><rect x="542.8" y="347.39" width="75.9" height="29.2" fill="#2f5ec4"/><rect x="620.4" y="347.39" width="618.6" height="29.2" fill="#dcf5fa"/><rect x="1240.2" y="347.39" width="264.5" height="29.2" fill="#f8f9fa"/><rect x="542.8" y="378.16" width="75.9" height="29.2" fill="#4285f4"/><rect x="620.4" y="378.16" width="541.1" height="29.2" fill="#dcf5fa"/><rect x="1162.7" y="378.16" width="342.0" height="29.2" fill="#f8f9fa"/><rect x="542.8" y="408.93" width="75.9" height="29.2" fill="#4285f4"/><rect x="620.4" y="408.93" width="463.6" height="29.2" fill="#dcf5fa"/><rect x="1085.2" y="408.93" width="419.5" height="29.2" fill="#f8f9fa"/><rect x="542.8" y="439.70" width="75.9" height="29.2" fill="#4285f4"/><rect x="620.4" y="439.70" width="386.1" height="29.2" fill="#dcf5fa"/><rect x="1007.7" y="439.70" width="497.0" height="29.2" fill="#f8f9fa"/><rect x="542.8" y="470.47" width="75.9" height="29.2" fill="#4285f4"/><rect x="620.4" y="470.47" width="308.6" height="29.2" fill="#dcf5fa"/><rect x="930.2" y="470.47" width="574.5" height="29.2" fill="#f8f9fa"/><rect x="542.8" y="501.24" width="75.9" height="29.2" fill="#4285f4"/><rect x="620.4" y="501.24" width="231.1" height="29.2" fill="#dcf5fa"/><rect x="852.7" y="501.24" width="652.0" height="29.2" fill="#f8f9fa"/><rect x="542.8" y="532.01" width="75.9" height="29.2" fill="#4285f4"/><rect x="620.4" y="532.01" width="153.6" height="29.2" fill="#dcf5fa"/><rect x="775.2" y="532.01" width="729.5" height="29.2" fill="#f8f9fa"/><rect x="542.8" y="562.78" width="75.9" height="29.2" fill="#4285f4"/><rect x="620.4" y="562.78" width="76.1" height="29.2" fill="#dcf5fa"/><rect x="697.7" y="562.78" width="807.0" height="29.2" fill="#f8f9fa"/><rect x="696.55" y="132.00" width="1.1" height="29.2" fill="#fff" fill-opacity=".6"/><rect x="774.05" y="132.00" width="1.1" height="29.2" fill="#fff" fill-opacity=".6"/><rect x="851.55" y="132.00" width="1.1" height="29.2" fill="#fff" fill-opacity=".6"/><rect x="929.05" y="132.00" width="1.1" height="29.2" fill="#fff" fill-opacity=".6"/><rect x="1006.55" y="132.00" width="1.1" height="29.2" fill="#fff" fill-opacity=".6"/><rect x="1084.05" y="132.00" width="1.1" height="29.2" fill="#fff" fill-opacity=".6"/><rect x="1161.55" y="132.00" width="1.1" height="29.2" fill="#fff" fill-opacity=".6"/><rect x="1239.05" y="132.00" width="1.1" height="29.2" fill="#fff" fill-opacity=".6"/><rect x="1316.55" y="132.00" width="1.1" height="29.2" fill="#fff" fill-opacity=".6"/><rect x="1394.05" y="132.00" width="1.1" height="29.2" fill="#fff" fill-opacity=".6"/><rect x="1471.55" y="132.00" width="1.1" height="29.2" fill="#fff" fill-opacity=".6"/><rect x="696.55" y="162.77" width="1.1" height="29.2" fill="#fff" fill-opacity=".6"/><rect x="774.05" y="162.77" width="1.1" height="29.2" fill="#fff" fill-opacity=".6"/><rect x="851.55" y="162.77" width="1.1" height="29.2" fill="#fff" fill-opacity=".6"/><rect x="929.05" y="162.77" width="1.1" height="29.2" fill="#fff" fill-opacity=".6"/><rect x="1006.55" y="162.77" width="1.1" height="29.2" fill="#fff" fill-opacity=".6"/><rect x="1084.05" y="162.77" width="1.1" height="29.2" fill="#fff" fill-opacity=".6"/><rect x="1161.55" y="162.77" width="1.1" height="29.2" fill="#fff" fill-opacity=".6"/><rect x="1239.05" y="162.77" width="1.1" height="29.2" fill="#fff" fill-opacity=".6"/><rect x="1316.55" y="162.77" width="1.1" height="29.2" fill="#fff" fill-opacity=".6"/><rect x="1394.05" y="162.77" width="1.1" height="29.2" fill="#fff" fill-opacity=".6"/><rect x="1471.55" y="162.77" width="1.1" height="29.2" fill="#fff" fill-opacity=".6"/><rect x="696.55" y="193.54" width="1.1" height="29.2" fill="#fff" fill-opacity=".6"/><rect x="774.05" y="193.54" width="1.1" height="29.2" fill="#fff" fill-opacity=".6"/><rect x="851.55" y="193.54" width="1.1" height="29.2" fill="#fff" fill-opacity=".6"/><rect x="929.05" y="193.54" width="1.1" height="29.2" fill="#fff" fill-opacity=".6"/><rect x="1006.55" y="193.54" width="1.1" height="29.2" fill="#fff" fill-opacity=".6"/><rect x="1084.05" y="193.54" width="1.1" height="29.2" fill="#fff" fill-opacity=".6"/><rect x="1161.55" y="193.54" width="1.1" height="29.2" fill="#fff" fill-opacity=".6"/><rect x="1239.05" y="193.54" width="1.1" height="29.2" fill="#fff" fill-opacity=".6"/><rect x="1316.55" y="193.54" width="1.1" height="29.2" fill="#fff" fill-opacity=".6"/><rect x="1394.05" y="193.54" width="1.1" height="29.2" fill="#fff" fill-opacity=".6"/><rect x="1471.55" y="193.54" width="1.1" height="29.2" fill="#fff" fill-opacity=".6"/><rect x="696.55" y="224.31" width="1.1" height="29.2" fill="#fff" fill-opacity=".6"/><rect x="774.05" y="224.31" width="1.1" height="29.2" fill="#fff" fill-opacity=".6"/><rect x="851.55" y="224.31" width="1.1" height="29.2" fill="#fff" fill-opacity=".6"/><rect x="929.05" y="224.31" width="1.1" height="29.2" fill="#fff" fill-opacity=".6"/><rect x="1006.55" y="224.31" width="1.1" height="29.2" fill="#fff" fill-opacity=".6"/><rect x="1084.05" y="224.31" width="1.1" height="29.2" fill="#fff" fill-opacity=".6"/><rect x="1161.55" y="224.31" width="1.1" height="29.2" fill="#fff" fill-opacity=".6"/><rect x="1239.05" y="224.31" width="1.1" height="29.2" fill="#fff" fill-opacity=".6"/><rect x="1316.55" y="224.31" width="1.1" height="29.2" fill="#fff" fill-opacity=".6"/><rect x="1394.05" y="224.31" width="1.1" height="29.2" fill="#fff" fill-opacity=".6"/><rect x="1471.55" y="224.31" width="1.1" height="29.2" fill="#fff" fill-opacity=".6"/><rect x="696.55" y="255.08" width="1.1" height="29.2" fill="#fff" fill-opacity=".6"/><rect x="774.05" y="255.08" width="1.1" height="29.2" fill="#fff" fill-opacity=".6"/><rect x="851.55" y="255.08" width="1.1" height="29.2" fill="#fff" fill-opacity=".6"/><rect x="929.05" y="255.08" width="1.1" height="29.2" fill="#fff" fill-opacity=".6"/><rect x="1006.55" y="255.08" width="1.1" height="29.2" fill="#fff" fill-opacity=".6"/><rect x="1084.05" y="255.08" width="1.1" height="29.2" fill="#fff" fill-opacity=".6"/><rect x="1161.55" y="255.08" width="1.1" height="29.2" fill="#fff" fill-opacity=".6"/><rect x="1239.05" y="255.08" width="1.1" height="29.2" fill="#fff" fill-opacity=".6"/><rect x="1316.55" y="255.08" width="1.1" height="29.2" fill="#fff" fill-opacity=".6"/><rect x="1394.05" y="255.08" width="1.1" height="29.2" fill="#fff" fill-opacity=".6"/><rect x="696.55" y="285.85" width="1.1" height="29.2" fill="#fff" fill-opacity=".6"/><rect x="774.05" y="285.85" width="1.1" height="29.2" fill="#fff" fill-opacity=".6"/><rect x="851.55" y="285.85" width="1.1" height="29.2" fill="#fff" fill-opacity=".6"/><rect x="929.05" y="285.85" width="1.1" height="29.2" fill="#fff" fill-opacity=".6"/><rect x="1006.55" y="285.85" width="1.1" height="29.2" fill="#fff" fill-opacity=".6"/><rect x="1084.05" y="285.85" width="1.1" height="29.2" fill="#fff" fill-opacity=".6"/><rect x="1161.55" y="285.85" width="1.1" height="29.2" fill="#fff" fill-opacity=".6"/><rect x="1239.05" y="285.85" width="1.1" height="29.2" fill="#fff" fill-opacity=".6"/><rect x="1316.55" y="285.85" width="1.1" height="29.2" fill="#fff" fill-opacity=".6"/><rect x="1471.30" y="285.85" width="1.6" height="29.2" fill="#fff"/><rect x="696.55" y="316.62" width="1.1" height="29.2" fill="#fff" fill-opacity=".6"/><rect x="774.05" y="316.62" width="1.1" height="29.2" fill="#fff" fill-opacity=".6"/><rect x="851.55" y="316.62" width="1.1" height="29.2" fill="#fff" fill-opacity=".6"/><rect x="929.05" y="316.62" width="1.1" height="29.2" fill="#fff" fill-opacity=".6"/><rect x="1006.55" y="316.62" width="1.1" height="29.2" fill="#fff" fill-opacity=".6"/><rect x="1084.05" y="316.62" width="1.1" height="29.2" fill="#fff" fill-opacity=".6"/><rect x="1161.55" y="316.62" width="1.1" height="29.2" fill="#fff" fill-opacity=".6"/><rect x="1239.05" y="316.62" width="1.1" height="29.2" fill="#fff" fill-opacity=".6"/><rect x="1393.80" y="316.62" width="1.6" height="29.2" fill="#fff"/><rect x="1471.30" y="316.62" width="1.6" height="29.2" fill="#fff"/><rect x="696.55" y="347.39" width="1.1" height="29.2" fill="#fff" fill-opacity=".6"/><rect x="774.05" y="347.39" width="1.1" height="29.2" fill="#fff" fill-opacity=".6"/><rect x="851.55" y="347.39" width="1.1" height="29.2" fill="#fff" fill-opacity=".6"/><rect x="929.05" y="347.39" width="1.1" height="29.2" fill="#fff" fill-opacity=".6"/><rect x="1006.55" y="347.39" width="1.1" height="29.2" fill="#fff" fill-opacity=".6"/><rect x="1084.05" y="347.39" width="1.1" height="29.2" fill="#fff" fill-opacity=".6"/><rect x="1161.55" y="347.39" width="1.1" height="29.2" fill="#fff" fill-opacity=".6"/><rect x="1316.30" y="347.39" width="1.6" height="29.2" fill="#fff"/><rect x="1393.80" y="347.39" width="1.6" height="29.2" fill="#fff"/><rect x="1471.30" y="347.39" width="1.6" height="29.2" fill="#fff"/><rect x="696.55" y="378.16" width="1.1" height="29.2" fill="#fff" fill-opacity=".6"/><rect x="774.05" y="378.16" width="1.1" height="29.2" fill="#fff" fill-opacity=".6"/><rect x="851.55" y="378.16" width="1.1" height="29.2" fill="#fff" fill-opacity=".6"/><rect x="929.05" y="378.16" width="1.1" height="29.2" fill="#fff" fill-opacity=".6"/><rect x="1006.55" y="378.16" width="1.1" height="29.2" fill="#fff" fill-opacity=".6"/><rect x="1084.05" y="378.16" width="1.1" height="29.2" fill="#fff" fill-opacity=".6"/><rect x="1238.80" y="378.16" width="1.6" height="29.2" fill="#fff"/><rect x="1316.30" y="378.16" width="1.6" height="29.2" fill="#fff"/><rect x="1393.80" y="378.16" width="1.6" height="29.2" fill="#fff"/><rect x="1471.30" y="378.16" width="1.6" height="29.2" fill="#fff"/><rect x="696.55" y="408.93" width="1.1" height="29.2" fill="#fff" fill-opacity=".6"/><rect x="774.05" y="408.93" width="1.1" height="29.2" fill="#fff" fill-opacity=".6"/><rect x="851.55" y="408.93" width="1.1" height="29.2" fill="#fff" fill-opacity=".6"/><rect x="929.05" y="408.93" width="1.1" height="29.2" fill="#fff" fill-opacity=".6"/><rect x="1006.55" y="408.93" width="1.1" height="29.2" fill="#fff" fill-opacity=".6"/><rect x="1161.30" y="408.93" width="1.6" height="29.2" fill="#fff"/><rect x="1238.80" y="408.93" width="1.6" height="29.2" fill="#fff"/><rect x="1316.30" y="408.93" width="1.6" height="29.2" fill="#fff"/><rect x="1393.80" y="408.93" width="1.6" height="29.2" fill="#fff"/><rect x="1471.30" y="408.93" width="1.6" height="29.2" fill="#fff"/><rect x="696.55" y="439.70" width="1.1" height="29.2" fill="#fff" fill-opacity=".6"/><rect x="774.05" y="439.70" width="1.1" height="29.2" fill="#fff" fill-opacity=".6"/><rect x="851.55" y="439.70" width="1.1" height="29.2" fill="#fff" fill-opacity=".6"/><rect x="929.05" y="439.70" width="1.1" height="29.2" fill="#fff" fill-opacity=".6"/><rect x="1083.80" y="439.70" width="1.6" height="29.2" fill="#fff"/><rect x="1161.30" y="439.70" width="1.6" height="29.2" fill="#fff"/><rect x="1238.80" y="439.70" width="1.6" height="29.2" fill="#fff"/><rect x="1316.30" y="439.70" width="1.6" height="29.2" fill="#fff"/><rect x="1393.80" y="439.70" width="1.6" height="29.2" fill="#fff"/><rect x="1471.30" y="439.70" width="1.6" height="29.2" fill="#fff"/><rect x="696.55" y="470.47" width="1.1" height="29.2" fill="#fff" fill-opacity=".6"/><rect x="774.05" y="470.47" width="1.1" height="29.2" fill="#fff" fill-opacity=".6"/><rect x="851.55" y="470.47" width="1.1" height="29.2" fill="#fff" fill-opacity=".6"/><rect x="1006.30" y="470.47" width="1.6" height="29.2" fill="#fff"/><rect x="1083.80" y="470.47" width="1.6" height="29.2" fill="#fff"/><rect x="1161.30" y="470.47" width="1.6" height="29.2" fill="#fff"/><rect x="1238.80" y="470.47" width="1.6" height="29.2" fill="#fff"/><rect x="1316.30" y="470.47" width="1.6" height="29.2" fill="#fff"/><rect x="1393.80" y="470.47" width="1.6" height="29.2" fill="#fff"/><rect x="1471.30" y="470.47" width="1.6" height="29.2" fill="#fff"/><rect x="696.55" y="501.24" width="1.1" height="29.2" fill="#fff" fill-opacity=".6"/><rect x="774.05" y="501.24" width="1.1" height="29.2" fill="#fff" fill-opacity=".6"/><rect x="928.80" y="501.24" width="1.6" height="29.2" fill="#fff"/><rect x="1006.30" y="501.24" width="1.6" height="29.2" fill="#fff"/><rect x="1083.80" y="501.24" width="1.6" height="29.2" fill="#fff"/><rect x="1161.30" y="501.24" width="1.6" height="29.2" fill="#fff"/><rect x="1238.80" y="501.24" width="1.6" height="29.2" fill="#fff"/><rect x="1316.30" y="501.24" width="1.6" height="29.2" fill="#fff"/><rect x="1393.80" y="501.24" width="1.6" height="29.2" fill="#fff"/><rect x="1471.30" y="501.24" width="1.6" height="29.2" fill="#fff"/><rect x="696.55" y="532.01" width="1.1" height="29.2" fill="#fff" fill-opacity=".6"/><rect x="851.30" y="532.01" width="1.6" height="29.2" fill="#fff"/><rect x="928.80" y="532.01" width="1.6" height="29.2" fill="#fff"/><rect x="1006.30" y="532.01" width="1.6" height="29.2" fill="#fff"/><rect x="1083.80" y="532.01" width="1.6" height="29.2" fill="#fff"/><rect x="1161.30" y="532.01" width="1.6" height="29.2" fill="#fff"/><rect x="1238.80" y="532.01" width="1.6" height="29.2" fill="#fff"/><rect x="1316.30" y="532.01" width="1.6" height="29.2" fill="#fff"/><rect x="1393.80" y="532.01" width="1.6" height="29.2" fill="#fff"/><rect x="1471.30" y="532.01" width="1.6" height="29.2" fill="#fff"/><rect x="773.80" y="562.78" width="1.6" height="29.2" fill="#fff"/><rect x="851.30" y="562.78" width="1.6" height="29.2" fill="#fff"/><rect x="928.80" y="562.78" width="1.6" height="29.2" fill="#fff"/><rect x="1006.30" y="562.78" width="1.6" height="29.2" fill="#fff"/><rect x="1083.80" y="562.78" width="1.6" height="29.2" fill="#fff"/><rect x="1161.30" y="562.78" width="1.6" height="29.2" fill="#fff"/><rect x="1238.80" y="562.78" width="1.6" height="29.2" fill="#fff"/><rect x="1316.30" y="562.78" width="1.6" height="29.2" fill="#fff"/><rect x="1393.80" y="562.78" width="1.6" height="29.2" fill="#fff"/><rect x="1471.30" y="562.78" width="1.6" height="29.2" fill="#fff"/></svg>
<div class="rl" style="top:138.20px">Nov 1 - Nov 2, 2024</div>
<div class="rs" style="top:151.50px">4,779 users</div>
<div class="cell" style="left:538.8px;top:132.00px;color:#1f3f8f">4,779</div>
<div class="cell" style="left:616.5px;top:132.00px">255</div>
<div class="cell" style="left:694.0px;top:132.00px">100</div>
<div class="cell" style="left:771.5px;top:132.00px">74</div>
<div class="cell" style="left:849.0px;top:132.00px">39</div>
<div class="cell" style="left:926.5px;top:132.00px">47</div>
<div class="cell" style="left:1004.0px;top:132.00px">35</div>
<div class="cell" style="left:1081.5px;top:132.00px">20</div>
<div class="cell" style="left:1159.0px;top:132.00px">10</div>
<div class="cell" style="left:1236.5px;top:132.00px">3</div>
<div class="cell" style="left:1314.0px;top:132.00px">6</div>
<div class="cell" style="left:1391.5px;top:132.00px">6</div>
<div class="rl" style="top:168.97px">Nov 3 - Nov 9, 2024</div>
<div class="rs" style="top:182.27px">20,421 users</div>
<div class="cell" style="left:538.8px;top:162.77px;color:#fff">20,421</div>
<div class="cell" style="left:616.5px;top:162.77px">882</div>
<div class="cell" style="left:694.0px;top:162.77px">429</div>
<div class="cell" style="left:771.5px;top:162.77px">290</div>
<div class="cell" style="left:849.0px;top:162.77px">376</div>
<div class="cell" style="left:926.5px;top:162.77px">252</div>
<div class="cell" style="left:1004.0px;top:162.77px">121</div>
<div class="cell" style="left:1081.5px;top:162.77px">46</div>
<div class="cell" style="left:1159.0px;top:162.77px">37</div>
<div class="cell" style="left:1236.5px;top:162.77px">67</div>
<div class="cell" style="left:1314.0px;top:162.77px">77</div>
<div class="cell" style="left:1391.5px;top:162.77px">66</div>
<div class="rl" style="top:199.74px">Nov 10 - Nov 16, 2024</div>
<div class="rs" style="top:213.04px">16,865 users</div>
<div class="cell" style="left:538.8px;top:193.54px;color:#fff">16,865</div>
<div class="cell" style="left:616.5px;top:193.54px">692</div>
<div class="cell" style="left:694.0px;top:193.54px">301</div>
<div class="cell" style="left:771.5px;top:193.54px">458</div>
<div class="cell" style="left:849.0px;top:193.54px">319</div>
<div class="cell" style="left:926.5px;top:193.54px">161</div>
<div class="cell" style="left:1004.0px;top:193.54px">40</div>
<div class="cell" style="left:1081.5px;top:193.54px">43</div>
<div class="cell" style="left:1159.0px;top:193.54px">48</div>
<div class="cell" style="left:1236.5px;top:193.54px">97</div>
<div class="cell" style="left:1314.0px;top:193.54px">57</div>
<div class="cell" style="left:1391.5px;top:193.54px">48</div>
<div class="rl" style="top:230.51px">Nov 17 - Nov 23, 2024</div>
<div class="rs" style="top:243.81px">16,407 users</div>
<div class="cell" style="left:538.8px;top:224.31px;color:#fff">16,407</div>
<div class="cell" style="left:616.5px;top:224.31px">593</div>
<div class="cell" style="left:694.0px;top:224.31px">398</div>
<div class="cell" style="left:771.5px;top:224.31px">267</div>
<div class="cell" style="left:849.0px;top:224.31px">156</div>
<div class="cell" style="left:926.5px;top:224.31px">60</div>
<div class="cell" style="left:1004.0px;top:224.31px">45</div>
<div class="cell" style="left:1081.5px;top:224.31px">56</div>
<div class="cell" style="left:1159.0px;top:224.31px">72</div>
<div class="cell" style="left:1236.5px;top:224.31px">58</div>
<div class="cell" style="left:1314.0px;top:224.31px">59</div>
<div class="cell" style="left:1391.5px;top:224.31px">38</div>
<div class="rl" style="top:261.28px">Nov 24 - Nov 30, 2024</div>
<div class="rs" style="top:274.58px">13,006 users</div>
<div class="cell" style="left:538.8px;top:255.08px;color:#fff">13,006</div>
<div class="cell" style="left:616.5px;top:255.08px">542</div>
<div class="cell" style="left:694.0px;top:255.08px">246</div>
<div class="cell" style="left:771.5px;top:255.08px">149</div>
<div class="cell" style="left:849.0px;top:255.08px">67</div>
<div class="cell" style="left:926.5px;top:255.08px">48</div>
<div class="cell" style="left:1004.0px;top:255.08px">57</div>
<div class="cell" style="left:1081.5px;top:255.08px">66</div>
<div class="cell" style="left:1159.0px;top:255.08px">37</div>
<div class="cell" style="left:1236.5px;top:255.08px">42</div>
<div class="cell" style="left:1314.0px;top:255.08px">44</div>
<div class="cell" style="left:1391.5px;top:255.08px">1</div>
<div class="rl" style="top:292.05px">Dec 1 - Dec 7, 2024</div>
<div class="rs" style="top:305.35px">17,215 users</div>
<div class="cell" style="left:538.8px;top:285.85px;color:#fff">17,215</div>
<div class="cell" style="left:616.5px;top:285.85px">865</div>
<div class="cell" style="left:694.0px;top:285.85px">309</div>
<div class="cell" style="left:771.5px;top:285.85px">105</div>
<div class="cell" style="left:849.0px;top:285.85px">81</div>
<div class="cell" style="left:926.5px;top:285.85px">120</div>
<div class="cell" style="left:1004.0px;top:285.85px">139</div>
<div class="cell" style="left:1081.5px;top:285.85px">98</div>
<div class="cell" style="left:1159.0px;top:285.85px">76</div>
<div class="cell" style="left:1236.5px;top:285.85px">61</div>
<div class="cell" style="left:1314.0px;top:285.85px">3</div>
<div class="rl" style="top:322.82px">Dec 8 - Dec 14, 2024</div>
<div class="rs" style="top:336.12px">15,043 users</div>
<div class="cell" style="left:538.8px;top:316.62px;color:#fff">15,043</div>
<div class="cell" style="left:616.5px;top:316.62px">559</div>
<div class="cell" style="left:694.0px;top:316.62px">149</div>
<div class="cell" style="left:771.5px;top:316.62px">102</div>
<div class="cell" style="left:849.0px;top:316.62px">128</div>
<div class="cell" style="left:926.5px;top:316.62px">121</div>
<div class="cell" style="left:1004.0px;top:316.62px">91</div>
<div class="cell" style="left:1081.5px;top:316.62px">72</div>
<div class="cell" style="left:1159.0px;top:316.62px">45</div>
<div class="cell" style="left:1236.5px;top:316.62px">3</div>
<div class="rl" style="top:353.59px">Dec 15 - Dec 21, 2024</div>
<div class="rs" style="top:366.89px">12,896 users</div>
<div class="cell" style="left:538.8px;top:347.39px;color:#fff">12,896</div>
<div class="cell" style="left:616.5px;top:347.39px">308</div>
<div class="cell" style="left:694.0px;top:347.39px">148</div>
<div class="cell" style="left:771.5px;top:347.39px">186</div>
<div class="cell" style="left:849.0px;top:347.39px">142</div>
<div class="cell" style="left:926.5px;top:347.39px">93</div>
<div class="cell" style="left:1004.0px;top:347.39px">98</div>
<div class="cell" style="left:1081.5px;top:347.39px">62</div>
<div class="cell" style="left:1159.0px;top:347.39px">3</div>
<div class="rl" style="top:384.36px">Dec 22 - Dec 28, 2024</div>
<div class="rs" style="top:397.66px">8,603 users</div>
<div class="cell" style="left:538.8px;top:378.16px;color:#fff">8,603</div>
<div class="cell" style="left:616.5px;top:378.16px">194</div>
<div class="cell" style="left:694.0px;top:378.16px">120</div>
<div class="cell" style="left:771.5px;top:378.16px">70</div>
<div class="cell" style="left:849.0px;top:378.16px">57</div>
<div class="cell" style="left:926.5px;top:378.16px">44</div>
<div class="cell" style="left:1004.0px;top:378.16px">33</div>
<div class="cell" style="left:1081.5px;top:378.16px">1</div>
<div class="rl" style="top:415.13px">Dec 29, 2024 - Jan 4, <span style="color:#9aa0a6">…</span></div>
<div class="rs" style="top:428.43px">8,267 users</div>
<div class="cell" style="left:538.8px;top:408.93px;color:#fff">8,267</div>
<div class="cell" style="left:616.5px;top:408.93px">236</div>
<div class="cell" style="left:694.0px;top:408.93px">119</div>
<div class="cell" style="left:771.5px;top:408.93px">73</div>
<div class="cell" style="left:849.0px;top:408.93px">51</div>
<div class="cell" style="left:926.5px;top:408.93px">37</div>
<div class="cell" style="left:1004.0px;top:408.93px">1</div>
<div class="rl" style="top:445.90px">Jan 5 - Jan 11, 2025</div>
<div class="rs" style="top:459.20px">10,083 users</div>
<div class="cell" style="left:538.8px;top:439.70px;color:#fff">10,083</div>
<div class="cell" style="left:616.5px;top:439.70px">391</div>
<div class="cell" style="left:694.0px;top:439.70px">195</div>
<div class="cell" style="left:771.5px;top:439.70px">142</div>
<div class="cell" style="left:849.0px;top:439.70px">102</div>
<div class="cell" style="left:926.5px;top:439.70px">3</div>
<div class="rl" style="top:476.67px">Jan 12 - Jan 18, 2025</div>
<div class="rs" style="top:489.97px">11,581 users</div>
<div class="cell" style="left:538.8px;top:470.47px;color:#fff">11,581</div>
<div class="cell" style="left:616.5px;top:470.47px">447</div>
<div class="cell" style="left:694.0px;top:470.47px">271</div>
<div class="cell" style="left:771.5px;top:470.47px">171</div>
<div class="cell" style="left:849.0px;top:470.47px">12</div>
<div class="rl" style="top:507.44px">Jan 19 - Jan 25, 2025</div>
<div class="rs" style="top:520.74px">10,297 users</div>
<div class="cell" style="left:538.8px;top:501.24px;color:#fff">10,297</div>
<div class="cell" style="left:616.5px;top:501.24px">385</div>
<div class="cell" style="left:694.0px;top:501.24px">177</div>
<div class="cell" style="left:771.5px;top:501.24px">11</div>
<div class="rl" style="top:538.21px">Jan 26 - Feb 1, 2025</div>
<div class="rs" style="top:551.51px">11,083 users</div>
<div class="cell" style="left:538.8px;top:532.01px;color:#fff">11,083</div>
<div class="cell" style="left:616.5px;top:532.01px">392</div>
<div class="cell" style="left:694.0px;top:532.01px">16</div>
<div class="rl" style="top:568.98px">Feb 2 - Feb 8, 2025</div>
<div class="rs" style="top:582.28px">11,263 users</div>
<div class="cell" style="left:538.8px;top:562.78px;color:#fff">11,263</div>
<div class="cell" style="left:616.5px;top:562.78px">67</div>
<div class="abs" style="left:1508.800px;top:40.800px;width:5px;height:576px;background:#c8c8c8"></div>
<div class="abs" style="left:414.5px;top:632.500px;width:919.300px;height:5.200px;background:#c8c8c8"></div>
</body></html>
